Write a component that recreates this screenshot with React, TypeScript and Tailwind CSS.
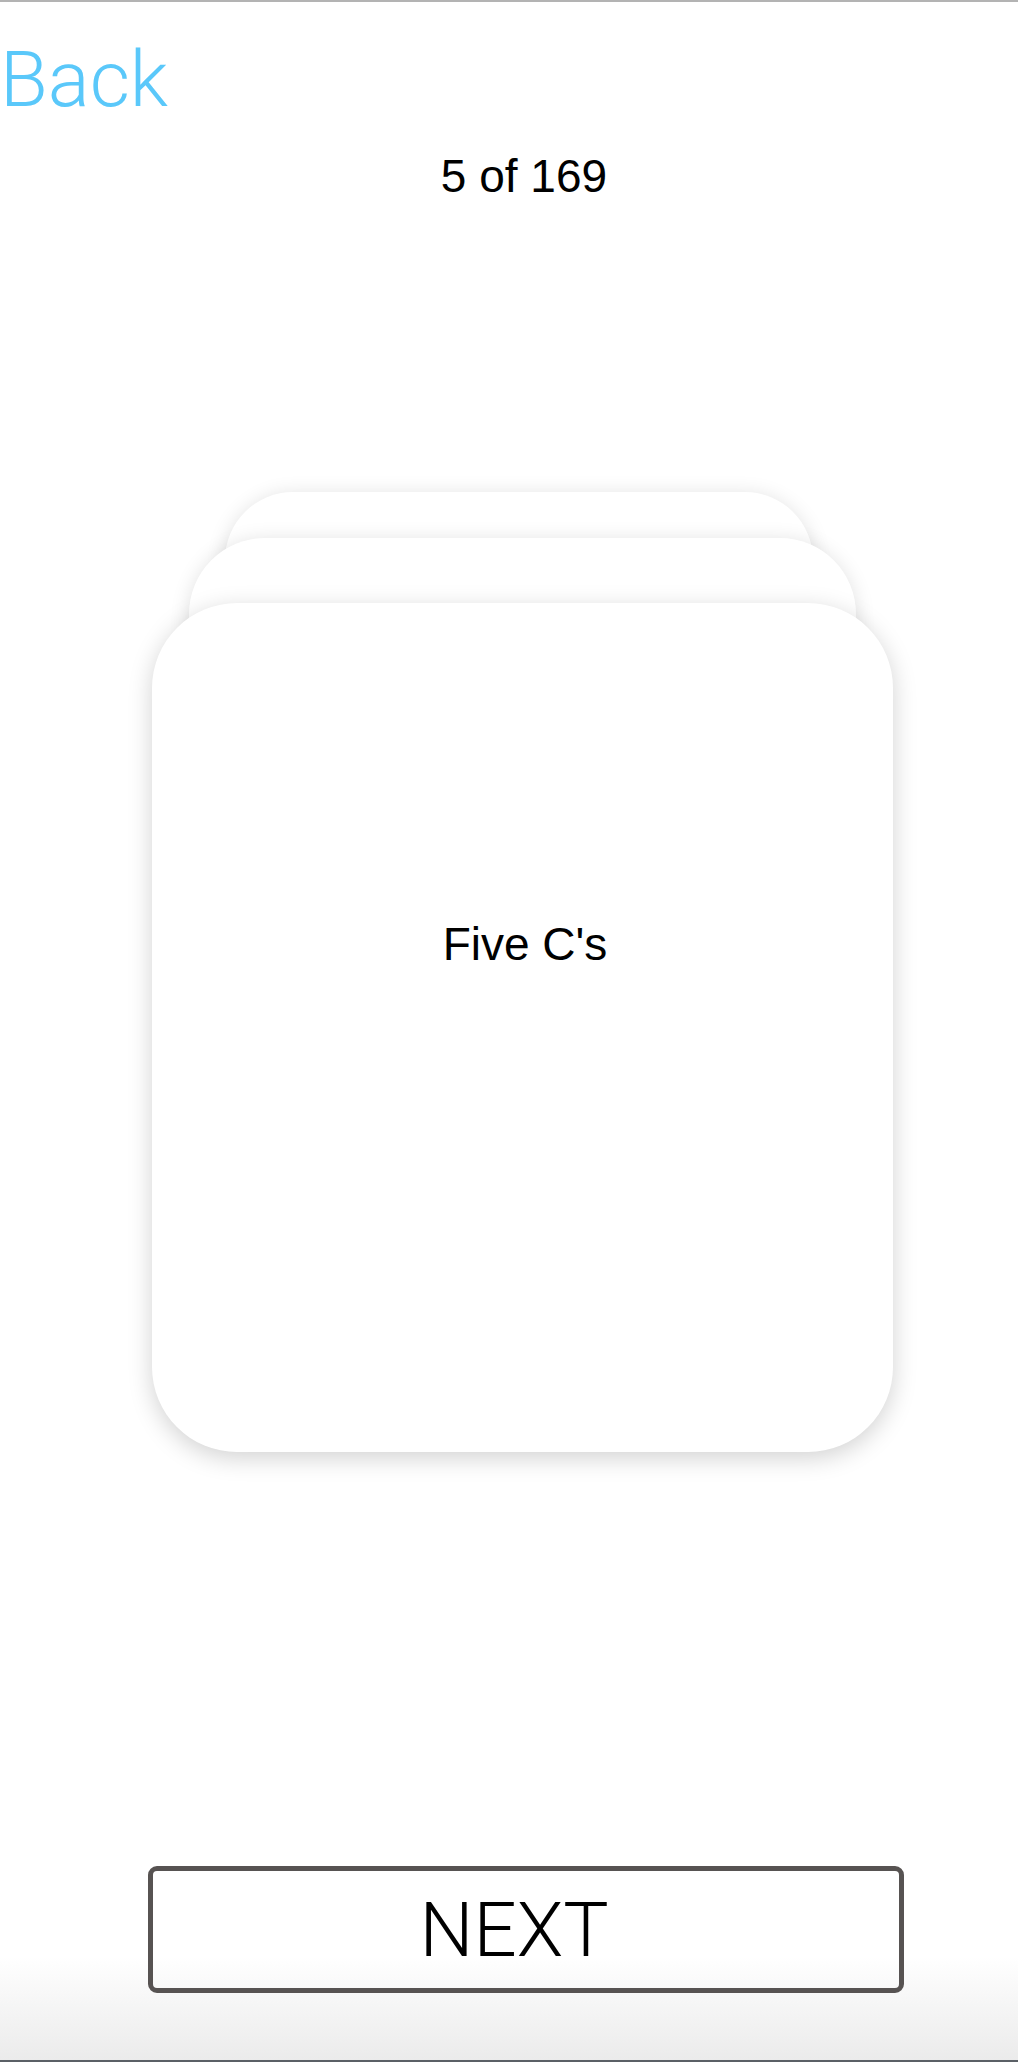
import React from 'react'

const sans = { fontFamily: '"Liberation Sans", Arial, sans-serif' }

const App = () => {
  return (
    <div
      className="h-screen w-full flex flex-col border-t-2 border-b-2 border-t-[#b3b3b3] border-b-[#5b6066] bg-[linear-gradient(to_bottom,#ffffff_0,#ffffff_1955px,#ebebeb_2058px)] overflow-hidden"
      style={sans}
    >
      {/* Back link */}
      <div className="pt-[39px]">
        <button className="text-[78px] leading-none font-light text-[#5ac8fa] pl-0 font-['Roboto',sans-serif]">
          Back
        </button>
      </div>

      {/* Counter */}
      <div className="flex justify-center pl-[30px] mt-[34px]">
        <span className="text-[46px] leading-none text-black">5 of 169</span>
      </div>

      {/* Card stack */}
      <div className="flex justify-center pl-[27px] mt-[293px]">
        <div className="relative w-[741px] pt-[111px]">
          <div className="absolute top-0 left-[73px] w-[588px] h-[400px] rounded-[68px] bg-white shadow-[0_2px_20px_rgba(0,0,0,0.12)]"></div>
          <div className="absolute top-[46px] left-[37px] w-[667px] h-[400px] rounded-[76px] bg-white shadow-[0_2px_20px_rgba(0,0,0,0.12)]"></div>
          <div className="relative w-[741px] h-[849px] rounded-[85px] bg-white shadow-[0_6px_24px_rgba(0,0,0,0.18)] flex justify-center pt-[318px]">
            <span className="text-[46px] leading-none text-black pl-[5px]">Five C's</span>
          </div>
        </div>
      </div>

      {/* Next button */}
      <div className="flex justify-center pl-[34px] mt-auto mb-[67px]">
        <button className="w-[756px] h-[127px] rounded-[9px] border-[5px] border-[#575352] flex items-center justify-center pr-[24px]">
          <span className="text-[76px] leading-none font-light text-black font-['Roboto',sans-serif]">NEXT</span>
        </button>
      </div>
    </div>
  )
}

export default App
